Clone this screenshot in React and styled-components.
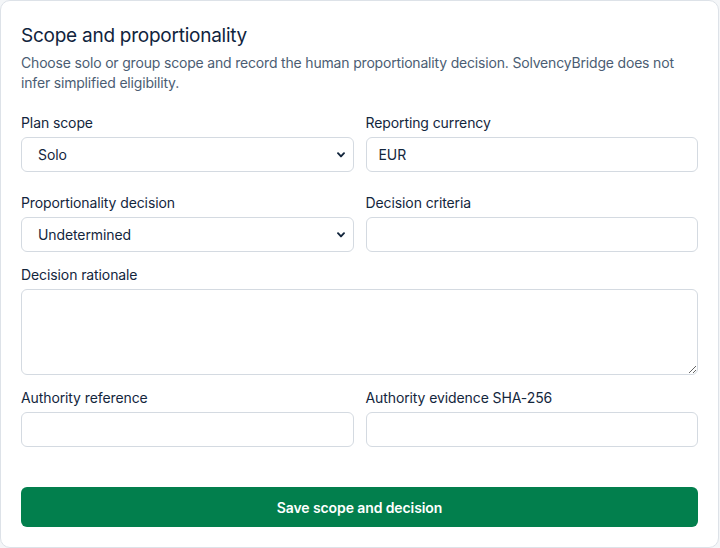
import React from 'react';
import styled, { createGlobalStyle } from 'styled-components';

const GlobalStyle = createGlobalStyle`
  * {
    box-sizing: border-box;
  }

  body {
    margin: 0;
    background: #f4f6f8;
    font-family: Inter, "Noto Sans", sans-serif;
    color: #13263d;
  }
`;

const StyledCard = styled.section`
  margin: 0 1px 0 0;
  padding: 21px 20px 20px;
  background: #ffffff;
  border: 1px solid #dde2e8;
  border-radius: 10px;
`;

const StyledTitle = styled.h2`
  margin: 0;
  font-size: 19px;
  line-height: 28px;
  font-weight: 400;
  letter-spacing: -0.25px;
  color: #10243d;
`;

const StyledIntro = styled.p`
  margin: 3px 0 0;
  font-size: 14px;
  line-height: 20px;
  letter-spacing: -0.18px;
  color: #4b5d73;
`;

const StyledForm = styled.form`
  margin-top: 20px;
  display: grid;
  grid-template-columns: 1fr 1fr;
  column-gap: 12px;
  row-gap: 13px;
`;

const StyledField = styled.label`
  display: flex;
  flex-direction: column;
  grid-column: ${({ $wide }) => ($wide ? '1 / -1' : 'auto')};
  margin-bottom: ${({ $spaced }) => ($spaced ? '8px' : '0')};
`;

const StyledLabelText = styled.span`
  margin-bottom: 4px;
  font-size: 14px;
  line-height: 20px;
  letter-spacing: -0.1px;
  color: #13263d;
`;

const controlStyles = `
  width: 100%;
  height: 35px;
  padding: 0 12px;
  font-family: Inter, "Noto Sans", sans-serif;
  font-size: 14px;
  letter-spacing: -0.1px;
  color: #13263d;
  background: #ffffff;
  border: 1px solid #d4dae1;
  border-radius: 6px;
  outline: none;
`;

const StyledInput = styled.input`
  ${controlStyles}
`;

const StyledSelectWrap = styled.div`
  position: relative;

  svg {
    position: absolute;
    right: 9px;
    top: 50%;
    transform: translateY(-50%);
    pointer-events: none;
  }
`;

const StyledSelect = styled.select`
  ${controlStyles}
  padding-left: 16px;
  appearance: none;
`;

const StyledTextarea = styled.textarea`
  ${controlStyles}
  height: 86px;
  padding: 8px 12px;
  resize: vertical;
`;

const StyledButton = styled.button`
  grid-column: 1 / -1;
  margin-top: 27px;
  height: 40px;
  font-family: Inter, "Noto Sans", sans-serif;
  font-size: 14px;
  font-weight: 600;
  letter-spacing: -0.1px;
  color: #ffffff;
  background: #027f4d;
  border: none;
  border-radius: 6px;
  cursor: pointer;
`;

const Chevron = () => (
  <svg width="8" height="6" viewBox="0 0 8 6" fill="none">
    <polyline
      points="1,1.2 4,4.4 7,1.2"
      stroke="#13263d"
      strokeWidth="1.9"
      strokeLinecap="round"
      strokeLinejoin="round"
    />
  </svg>
);

const SelectField = ({ value, options }) => (
  <StyledSelectWrap>
    <StyledSelect defaultValue={value}>
      {options.map((option) => (
        <option key={option}>{option}</option>
      ))}
    </StyledSelect>
    <Chevron />
  </StyledSelectWrap>
);

const App = () => (
  <>
    <GlobalStyle />
    <StyledCard>
      <StyledTitle>Scope and proportionality</StyledTitle>
      <StyledIntro>
        Choose solo or group scope and record the human proportionality decision. SolvencyBridge does not
        infer simplified eligibility.
      </StyledIntro>
      <StyledForm onSubmit={(e) => e.preventDefault()}>
        <StyledField $spaced>
          <StyledLabelText>Plan scope</StyledLabelText>
          <SelectField value="Solo" options={['Solo', 'Group']} />
        </StyledField>
        <StyledField $spaced>
          <StyledLabelText>Reporting currency</StyledLabelText>
          <StyledInput defaultValue="EUR" />
        </StyledField>
        <StyledField>
          <StyledLabelText>Proportionality decision</StyledLabelText>
          <SelectField value="Undetermined" options={['Undetermined', 'Simplified', 'Standard']} />
        </StyledField>
        <StyledField>
          <StyledLabelText>Decision criteria</StyledLabelText>
          <StyledInput />
        </StyledField>
        <StyledField $wide>
          <StyledLabelText>Decision rationale</StyledLabelText>
          <StyledTextarea />
        </StyledField>
        <StyledField>
          <StyledLabelText>Authority reference</StyledLabelText>
          <StyledInput />
        </StyledField>
        <StyledField>
          <StyledLabelText>Authority evidence SHA-256</StyledLabelText>
          <StyledInput />
        </StyledField>
        <StyledButton type="submit">Save scope and decision</StyledButton>
      </StyledForm>
    </StyledCard>
  </>
);

export default App;
